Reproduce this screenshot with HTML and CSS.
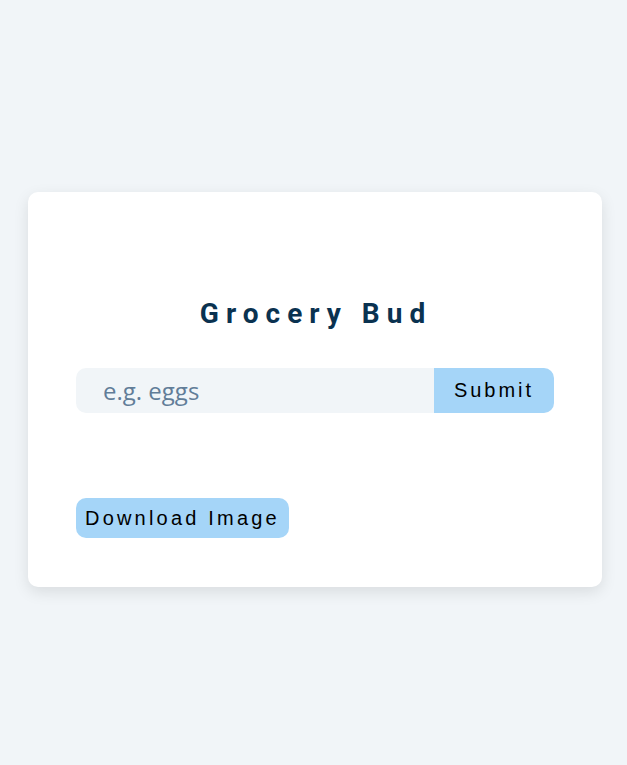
FILE: index.html
```html
<!DOCTYPE html>
<html lang="en">
<head>
<meta charset="utf-8">
<title>Grocery Bud</title>
<link rel="stylesheet" href="styles.css">
</head>
<body>
<main class="page">
  <section class="card">
    <h3 class="title">Grocery Bud</h3>
    <form class="grocery-form">
      <input class="grocery-input" type="text" placeholder="e.g. eggs">
      <button class="submit-btn" type="submit">Submit</button>
    </form>
    <button class="download-btn" type="button">Download Image</button>
  </section>
</main>
</body>
</html>
```
FILE: styles.css
```css
* { box-sizing: border-box; }
html, body { margin: 0; padding: 0; }
body {
  background: #f1f5f8;
  font-family: Roboto, "Liberation Sans", sans-serif;
  min-height: 765px;
}
.page {
  padding-top: 192px;
  padding-left: 28px;
}
.card {
  width: 574px;
  height: 395px;
  background: #fff;
  border-radius: 10px;
  box-shadow: 0 5px 15px rgba(0, 0, 0, 0.1);
  padding: 105px 48px 48px;
}
.title {
  margin: 0 0 37px;
  text-align: center;
  font-family: Roboto, sans-serif;
  font-weight: 700;
  font-size: 28px;
  line-height: 34px;
  letter-spacing: 7px;
  padding-left: 2px;
  color: #0a3250;
}
.grocery-form {
  display: flex;
  height: 45px;
}
.grocery-input {
  flex: 1;
  min-width: 0;
  border: none;
  background: #f1f5f8;
  border-top-left-radius: 10px;
  border-bottom-left-radius: 10px;
  padding: 0 0 0 27px;
  font-family: "Open Sans", sans-serif;
  font-size: 24px;
  color: #617d98;
  outline: none;
}
.grocery-input::placeholder { color: #617d98; }
.submit-btn {
  width: 120px;
  border: none;
  background: #a5d5f8;
  border-top-right-radius: 10px;
  border-bottom-right-radius: 10px;
  font-family: "Liberation Sans", Arial, sans-serif;
  font-size: 20px;
  letter-spacing: 3px;
  color: #000;
  padding: 0;
}
.download-btn {
  display: block;
  margin-top: 85px;
  height: 40px;
  border: none;
  background: #a5d5f8;
  border-radius: 10px;
  padding: 0 9px 0 9px;
  font-family: "Liberation Sans", Arial, sans-serif;
  font-size: 20px;
  letter-spacing: 3.2px;
  color: #000;
}
```
